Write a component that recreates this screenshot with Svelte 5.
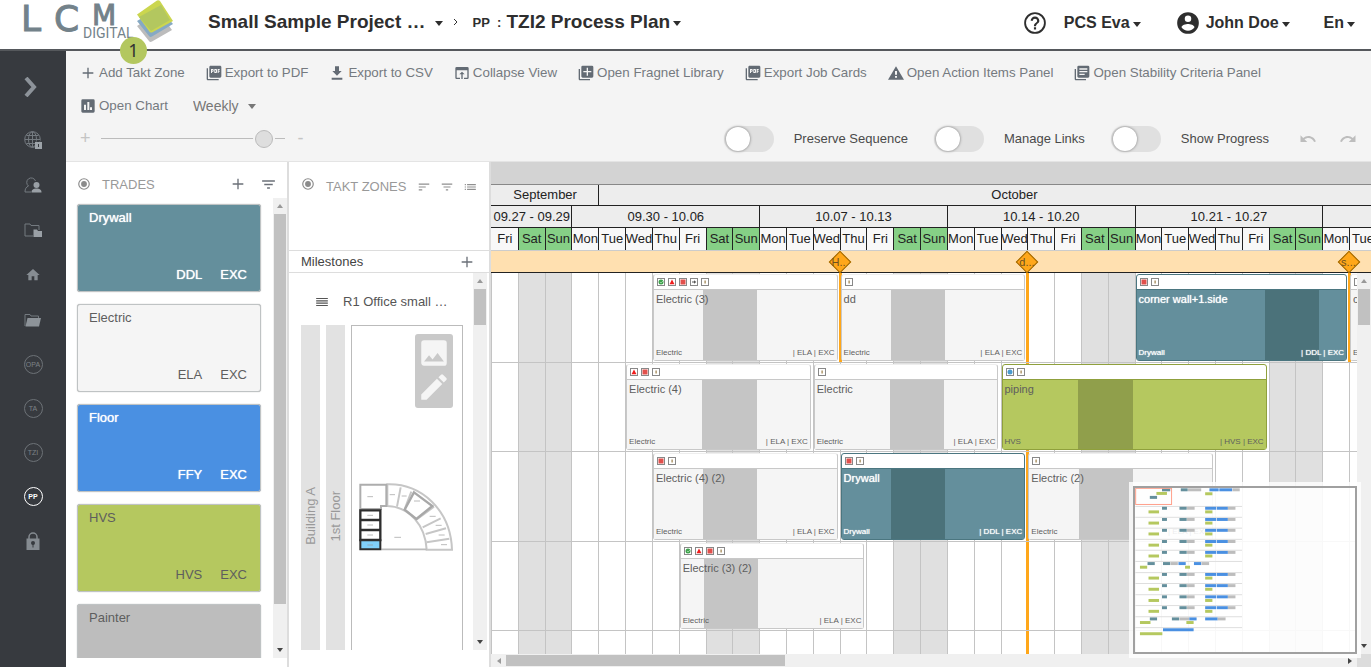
<script lang="ts">
	const DAYS = 38;
	const dayNames = ['Mon', 'Tue', 'Wed', 'Thu', 'Fri', 'Sat', 'Sun'];

	// the calendar starts on a Friday
	const days = Array.from({ length: DAYS }, (_, i) => dayNames[(i + 4) % 7]);

	const months = [
		{ name: 'September', span: 4 },
		{ name: 'October', span: 31 },
		{ name: 'November', span: 3 }
	];

	const weeks = [
		{ name: '09.27 - 09.29', span: 3 },
		{ name: '09.30 - 10.06', span: 7 },
		{ name: '10.07 - 10.13', span: 7 },
		{ name: '10.14 - 10.20', span: 7 },
		{ name: '10.21 - 10.27', span: 7 },
		{ name: '10.28 - 11.03', span: 7 }
	];

	const milestones = [
		{ day: 13, name: 'H..', long: false },
		{ day: 20, name: 'd...', long: true },
		{ day: 32, name: 's...', long: false }
	];

	const lanes = [
		[
			{ title: 'Electric (3)', trade: 'Electric', code: 'ELA', kind: 'electric', start: 6, length: 7, flags: ['ok', 'alert', 'stop', 'arrow', 'note'] },
			{ title: 'dd', trade: 'Electric', code: 'ELA', kind: 'electric', start: 13, length: 7, flags: ['note'] },
			{ title: 'corner wall+1.side', trade: 'Drywall', code: 'DDL', kind: 'drywall', start: 24, length: 8, flags: ['stop', 'note'] },
			{ title: 'c', trade: 'Electric', code: 'ELA', kind: 'electric', start: 32, length: 6, flags: ['note'] }
		],
		[
			{ title: 'Electric (4)', trade: 'Electric', code: 'ELA', kind: 'electric', start: 5, length: 7, flags: ['alert', 'stop', 'note'] },
			{ title: 'Electric', trade: 'Electric', code: 'ELA', kind: 'electric', start: 12, length: 7, flags: ['note'] },
			{ title: 'piping', trade: 'HVS', code: 'HVS', kind: 'hvs', start: 19, length: 10, flags: ['water', 'note'] }
		],
		[
			{ title: 'Electric (4) (2)', trade: 'Electric', code: 'ELA', kind: 'electric', start: 6, length: 7, flags: ['stop', 'note'] },
			{ title: 'Drywall', trade: 'Drywall', code: 'DDL', kind: 'drywall', start: 13, length: 7, flags: ['stop', 'note'] },
			{ title: 'Electric (2)', trade: 'Electric', code: 'ELA', kind: 'electric', start: 20, length: 7, flags: ['note'] }
		],
		[
			{ title: 'Electric (3) (2)', trade: 'Electric', code: 'ELA', kind: 'electric', start: 7, length: 7, flags: ['ok', 'alert', 'stop', 'note'] }
		]
	];

	const trades = [
		{ name: 'Drywall', code: 'DDL', kind: 'drywall' },
		{ name: 'Electric', code: 'ELA', kind: 'electric' },
		{ name: 'Floor', code: 'FFY', kind: 'floor' },
		{ name: 'HVS', code: 'HVS', kind: 'hvs' },
		{ name: 'Painter', code: '', kind: 'painter' }
	];

	const tools = [
		{ icon: 'plus', label: 'Add Takt Zone' },
		{ icon: 'pdf', label: 'Export to PDF' },
		{ icon: 'download', label: 'Export to CSV' },
		{ icon: 'browser', label: 'Collapse View' },
		{ icon: 'library', label: 'Open Fragnet Library' },
		{ icon: 'pdf', label: 'Export Job Cards' },
		{ icon: 'warning', label: 'Open Action Items Panel' },
		{ icon: 'books', label: 'Open Stability Criteria Panel' },
		{ icon: 'chart', label: 'Open Chart' }
	];

	const switches = ['Preserve Sequence', 'Manage Links', 'Show Progress'];

	const paths: Record<string, string> = {
		plus: 'M20 13h-7v7h-2v-7H4v-2h7V4h2v7h7z',
		pdf: 'M21 1H7C5.900 1 5 1.900 5 3v14c0 1.100.9 2 2 2h14c1.100 0 2-.9 2-2V3c0-1.100-.9-2-2-2zM11.500 8.500c0 .83-.67 1.500-1.500 1.500H9v2H7.500V6H10c.83 0 1.500.67 1.500 1.500v1zm5 2c0 .83-.67 1.500-1.500 1.500h-2.500V6H15c.83 0 1.500.67 1.500 1.500v3zm4-3H19v1h1.500V10H19v2h-1.500V6h3v1.500zM9 8.500h1v-1H9v1zM3 5H1v16c0 1.100.9 2 2 2h16v-2H3V5zm11 5.500h1v-3h-1v3z',
		download: 'M19 9h-4V2H9v7H5l7 7 7-7zM4 19v3h16v-3z',
		browser: 'M20 3H4a2 2 0 0 0-2 2v14c0 1.100.9 2 2 2h5v-2H4V8h16v11h-5v2h5a2 2 0 0 0 2-2V5a2 2 0 0 0-2-2zm-8 7l-4 4h3v7h2v-7h3z',
		library: 'M3 6H1v15c0 1.100.9 2 2 2h15v-2H3zm18-5H7a2 2 0 0 0-2 2v14c0 1.100.9 2 2 2h14a2 2 0 0 0 2-2V3a2 2 0 0 0-2-2zm-1 10h-5v5h-2v-5H8V9h5V4h2v5h5z',
		warning: 'M0 22h24L12 2zm13.500-3h-3v-2.500h3zm0-4.500h-3V9h3z',
		books: 'M3 6H1v15c0 1.100.9 2 2 2h15v-2H3zm18-5H7a2 2 0 0 0-2 2v14c0 1.100.9 2 2 2h14a2 2 0 0 0 2-2V3a2 2 0 0 0-2-2zm-1 10H8V9h12zm-4 4H8v-2h8zm4-8H8V5h12z',
		chart: 'M20 2H4a2 2 0 0 0-2 2v16c0 1.100.9 2 2 2h16a2 2 0 0 0 2-2V4a2 2 0 0 0-2-2zM9 18H6v-8h3zm5 0h-3V6h3zm4 0h-3v-4h3z',
		undo: 'M12.500 8c-2.650 0-5.050.99-6.900 2.600L2 7v9h9l-3.620-3.620c1.390-1.160 3.160-1.880 5.120-1.880 3.540 0 6.550 2.310 7.600 5.500l2.370-.78C21.080 11.030 17.150 8 12.500 8z',
		redo: 'M18.400 10.600C16.550 8.990 14.150 8 11.500 8c-4.650 0-8.580 3.030-9.960 7.220L3.900 16c1.050-3.190 4.050-5.500 7.600-5.500 1.950 0 3.730.72 5.120 1.880L13 16h9V7l-3.600 3.600z',
		filter: 'M10 18h4v-2h-4zM3 6v2h18V6zm3 7h12v-2H6z',
		sort: 'M3 18h6v-2H3zM3 6v2h18V6zm0 7h12v-2H3z',
		list: 'M3 9h2V7H3zm0 4h2v-2H3zm0 4h2v-2H3zm4-10v2h15V7zm0 6h15v-2H7zm0 4h15v-2H7z',
		menu: 'M2 19h20v-2H2zm0-4h20v-2H2zm0-4h20V9H2zm0-4h20V5H2z',
		radio: 'M12 7a5 5 0 1 0 0 10 5 5 0 0 0 0-10zm0-5a10 10 0 1 0 0 20 10 10 0 0 0 0-20zm0 18a8 8 0 1 1 0-16 8 8 0 0 1 0 16z',
		help: 'M11 18h2v-2h-2zm1-16a10 10 0 1 0 0 20 10 10 0 0 0 0-20zm0 18.300a8.300 8.300 0 1 1 0-16.600 8.300 8.300 0 0 1 0 16.600zM12 6a4 4 0 0 0-4 4h2a2 2 0 1 1 4 0c0 2-3 1.750-3 5h2c0-2.250 3-2.500 3-5a4 4 0 0 0-4-4z',
		account: 'M12 2a10 10 0 1 0 0 20 10 10 0 0 0 0-20zm0 3a3 3 0 1 1 0 6 3 3 0 0 1 0-6zm0 14.200a7.200 7.200 0 0 1-6-3.220c.03-1.990 4-3.080 6-3.080s5.970 1.090 6 3.080a7.200 7.200 0 0 1-6 3.220z',
		image: 'M21 19V5a2 2 0 0 0-2-2H5a2 2 0 0 0-2 2v14c0 1.100.9 2 2 2h14a2 2 0 0 0 2-2zM8.500 13.500l2.500 3.010L14.500 12l4.500 6H5z',
		edit: 'M3 17.250V21h3.750L17.810 9.940l-3.750-3.750zM20.710 7.040a1 1 0 0 0 0-1.410l-2.340-2.340a1 1 0 0 0-1.410 0l-1.830 1.830 3.750 3.750z',
		home: 'M10 20v-6h4v6h5v-8h3L12 3 2 12h3v8z'
	};

	// overview bars: [x, y, width, colour]
	const teal = '#648f9c';
	const green = '#b5c85f';
	const blue = '#4a90e2';
	const grey = '#bdbdbd';
	const repeated = [97, 131, 164, 198, 231, 298, 332, 366, 399];
	const overview = [
		[423, 41, 25, teal], [406, 52, 32, green], [386, 64, 22, teal], [480, 41, 21, teal],
		[502, 41, 40, grey], [567, 41, 28, blue], [597, 41, 39, blue], [637, 41, 22, grey], [554, 53, 22, green],
		...repeated.flatMap((y) => [
			[423, y, 15, teal], [382, y + 11, 32, green], [476, y, 22, teal], [499, y, 23, grey],
			[554, y, 34, blue], [590, y, 33, blue], [623, y, 23, grey], [554, y + 11, 22, green]
		]),
		[379, 265, 22, teal], [356, 276, 22, green], [426, 265, 22, teal], [449, 265, 22, grey],
		[473, 265, 22, blue], [493, 276, 15, green], [520, 265, 22, blue], [543, 265, 23, grey],
		[386, 433, 22, teal], [356, 444, 32, green], [453, 433, 22, teal], [476, 433, 30, grey],
		[506, 433, 22, blue], [497, 444, 22, green], [554, 433, 38, blue], [592, 433, 24, grey],
		[426, 466, 93, blue], [356, 478, 68, green]
	] as [number, number, number, string][];

	const pct = (n: number) => (n / DAYS) * 100 + '%';

	function weekends(task: { start: number; length: number }) {
		const out: number[] = [];
		for (let d = task.start; d < task.start + task.length; d++) {
			if (days[d] === 'Sat') out.push(((d - task.start) / task.length) * 100);
		}
		return out;
	}
</script>

{#snippet icon(name: string, size: number)}
	<svg class="icon" width={size} height={size} viewBox="0 0 24 24" aria-hidden="true">
		<path d={paths[name]} fill="currentColor" fill-rule="evenodd" />
	</svg>
{/snippet}

{#snippet flag(name: string)}
	<svg width="8" height="8" viewBox="0 0 8 8" aria-hidden="true">
		<rect x=".5" y=".5" width="7" height="7" fill="#fff" stroke="#888" />
		{#if name === 'ok'}
			<circle cx="4" cy="4" r="2.500" fill="#3fa34d" />
			<path d="M3 4l1 1 2-2" stroke="#b7e4bd" fill="none" stroke-width=".7" />
		{:else if name === 'alert'}
			<path d="M4 1.500L6.500 6.200h-5z" fill="#f01c1c" />
		{:else if name === 'stop'}
			<rect x="1.500" y="1.500" width="5" height="5" fill="#e2504c" />
		{:else if name === 'arrow'}
			<path d="M2 3.500h2V2.200L6.300 4 4 5.800V4.500H2z" fill="#555" />
		{:else if name === 'water'}
			<circle cx="4" cy="4" r="2.500" fill="#4a9bd0" />
		{:else}
			<path d="M3.500 2.500h1.200V5.500H3.500z" fill="#9a7d45" />
		{/if}
	</svg>
{/snippet}

<div class="app">
	<header>
		<a class="logo" href="#home" aria-label="LCM Digital">
			<svg width="180" height="49" viewBox="0 0 180 49">
				<path d="M137 26L159 12 172 30 152 41.500Q150 42.500 149 41Z" fill="#bcbcbc" />
				<path d="M137 21L159 8 173 24 152 36.500Q150 37.500 149 36Z" fill="#86a9c4" />
				<path d="M137 14.500L157 .5Q159 0 160 1L173 21 152 32.500Q150 33 149 31Z" fill="#cbd64f" />
				<path d="M139 17L161 5 170 20 151 31Z" fill="#b3c75f" />
				<text class="lcm" x="21" y="31">L</text>
				<text class="lcm" x="54" y="31">C</text>
				<text class="lcm small" x="92" y="25">M</text>
				<text class="digital" x="83" y="38">DIGITAL</text>
			</svg>
		</a>
		<span class="badge">1</span>
		<nav class="crumbs" aria-label="Breadcrumb">
			<button class="title">Small Sample Project …<i class="caret spaced"></i></button>
			<svg width="6" height="8" viewBox="0 0 6 8"><path d="M1 1l3 3-3 3" fill="none" stroke="#333" /></svg>
			<button class="title"><small>PP&nbsp; :</small>TZI2 Process Plan<i class="caret"></i></button>
		</nav>
		<div class="account">
			<button class="help" aria-label="Help">{@render icon('help', 26)}</button>
			<button>PCS Eva<i class="caret"></i></button>
			<button class="user">{@render icon('account', 26)}John Doe<i class="caret"></i></button>
			<button class="lang">En<i class="caret"></i></button>
		</div>
	</header>

	<div class="body">
		<aside class="sidebar">
			<button class="expand" aria-label="Expand menu">
				<svg width="14" height="20" viewBox="0 0 14 20"><path d="M2 1l8 9-8 9" fill="none" stroke="#8d939a" stroke-width="4" /></svg>
			</button>
			<nav>
				<a href="#global" aria-label="Global">
					<svg width="18" height="18" viewBox="0 0 18 18" fill="none" stroke="#747a80">
						<circle cx="8.500" cy="8.500" r="7.800" />
						<ellipse cx="8.500" cy="8.500" rx="4" ry="7.800" />
						<path d="M8.500 1v15M1 8.500h15M2.500 4.500h12M2.500 12.500h12" />
						<path d="M11 11h7v7h-7z" fill="#9da3a9" stroke="none" />
						<path d="M13 11V9.500h3V11M14.500 13v3" stroke="#373a3f" />
					</svg>
				</a>
				<a href="#users" aria-label="Users">
					<svg width="18" height="18" viewBox="0 0 18 18">
						<path d="M7 16H1c0-3 1-5 3.500-6A4.500 4.500 0 1 1 11.500 5" fill="none" stroke="#747a80" />
						<circle cx="12.500" cy="9" r="3" fill="#9aa0a6" />
						<path d="M7.500 16.500c0-3 2-4 5-4s5 1 5 4z" fill="#9aa0a6" />
					</svg>
				</a>
				<a href="#folders" aria-label="Folders">
					<svg width="18" height="18" viewBox="0 0 18 18">
						<path d="M9 15H1V3h5l1 1.500h8V9" fill="none" stroke="#747a80" />
						<path d="M9.500 8.500H13l1 1.500h4v6H9.500z" fill="#9aa0a6" />
					</svg>
				</a>
				<a href="#start" aria-label="Home">{@render icon('home', 16)}</a>
				<a href="#files" aria-label="Files">
					<svg width="18" height="18" viewBox="0 0 18 18">
						<path d="M1 15V3.500h5L7 5h7.500v2" fill="none" stroke="#747a80" />
						<path d="M3.500 7H17l-2 8.500H1.500z" fill="#8d9399" />
					</svg>
				</a>
				<a href="#opa" class="ring">OPA</a>
				<a href="#ta" class="ring">TA</a>
				<a href="#tzi" class="ring">TZI</a>
				<a href="#pp" class="ring current">PP</a>
				<a href="#lock" aria-label="Lock">
					<svg width="18" height="18" viewBox="0 0 18 18">
						<path d="M5 8V5a4 4 0 0 1 8 0v3" fill="none" stroke="#858b91" stroke-width="1.500" />
						<path d="M2.500 6.500h13V18h-13z" fill="#858b91" />
						<circle cx="9" cy="11" r="2" fill="#373a3f" />
						<path d="M9 11v4.500" stroke="#373a3f" />
					</svg>
				</a>
			</nav>
		</aside>

		<main>
			<section class="toolbar">
				<div class="tools">
					{#each tools as tool}
						<button>{@render icon(tool.icon, 16)}{tool.label}</button>
					{/each}
					<div class="select">
						<select aria-label="Interval"><option>Weekly</option></select>
						<i class="caret spaced"></i>
					</div>
				</div>
				<div class="controls">
					<button class="zoom" aria-label="Zoom in">+</button>
					<input class="slider" type="range" min="0" max="100" value="93" aria-label="Zoom" />
					<button class="zoom" aria-label="Zoom out">-</button>
					<div class="switches">
						{#each switches as name}
							<label><input type="checkbox" />{name}</label>
						{/each}
						<div class="history">
							<button aria-label="Undo">{@render icon('undo', 18)}</button>
							<button aria-label="Redo">{@render icon('redo', 18)}</button>
						</div>
					</div>
				</div>
			</section>

			<div class="panels">
				<section class="trades">
					<div class="panel-head">
						{@render icon('radio', 14)}
						<h2>TRADES</h2>
						<button class="push" aria-label="Add trade">{@render icon('plus', 16)}</button>
						<button aria-label="Filter trades">{@render icon('filter', 17)}</button>
					</div>
					<div class="scroll-area">
						<div class="cards">
							{#each trades as trade}
								<article class="card {trade.kind}">
									<strong>{trade.name}</strong>
									{#if trade.code}
										<p><span>{trade.code}</span><span>EXC</span></p>
									{/if}
								</article>
							{/each}
						</div>
						<div class="vbar trades-bar"><i class="up"></i><b></b><i class="down"></i></div>
					</div>
				</section>

				<section class="zones">
					<div class="panel-head">
						{@render icon('radio', 14)}
						<h2>TAKT ZONES</h2>
						<button aria-label="Sort">{@render icon('sort', 14)}</button>
						<button aria-label="Filter zones">{@render icon('filter', 14)}</button>
						<button aria-label="List">{@render icon('list', 14)}</button>
					</div>
					<div class="milestone-head">
						<span>Milestones</span>
						<button aria-label="Add milestone">{@render icon('plus', 16)}</button>
					</div>
					<div class="scroll-area">
						<div class="zone-tree">
							<div class="zone-name">{@render icon('menu', 14)}<span>R1 Office small …</span></div>
							<div class="levels">
								<div class="level">Building A</div>
								<div class="level">1st Floor</div>
								<div class="plan">
									<div class="plan-tools">
										<button aria-label="Image">{@render icon('image', 34)}</button>
										<button aria-label="Edit">{@render icon('edit', 34)}</button>
									</div>
									<svg class="floor" width="97" height="70" viewBox="218 216 291 210" fill="none">
										<path d="M306 223C408 220 496 300 500 419H424C420 345 372 290 306 288Z" stroke="#c6c6c6" stroke-width="6" />
										<path d="M346 232L335 290M378 245L358 297M446 290L394 328M466 325L412 352M482 355L421 372M492 386L424 397" stroke="#c6c6c6" stroke-width="6" />
										<path d="M386 247L441 288 393 327 358 299Z" stroke="#a8a8a8" stroke-width="7" />
										<path d="M225 224H303V288H287V297H225Z" stroke="#adadad" stroke-width="6" />
										<path d="M288 418H424" stroke="#bbb" stroke-width="5" />
										<path d="M225 301H285V330H225ZM225 330H285V360H225ZM225 360H285V390H225Z" stroke="#2d2d2d" stroke-width="7" />
										<path d="M225 391H285V418H225Z" fill="#80d0fa" stroke="#2d2d2d" stroke-width="6" />
										<path d="M246 260h17M246 316h17M246 345h17M246 375h17M246 405h17M313 254h16M349 258h15M386 273h18M433 319h18M451 346h18M460 375h18M467 404h18M327 382h20" stroke="#999" stroke-width="2" />
									</svg>
								</div>
							</div>
						</div>
						<div class="vbar zones-bar"><i class="up"></i><b></b><i class="down"></i></div>
					</div>
				</section>

				<section class="chart">
					<div class="strip"></div>
					<div class="viewport">
						<div class="timeline">
							<div class="cal months">
								{#each months as month}
									<span style="grid-column: span {month.span}">{month.name}</span>
								{/each}
							</div>
							<div class="cal weeks">
								{#each weeks as week}
									<span style="grid-column: span {week.span}">{week.name}</span>
								{/each}
							</div>
							<div class="cal days">
								{#each days as day}
									<span class:weekend={day === 'Sat' || day === 'Sun'}>{day}</span>
								{/each}
							</div>
							<div class="milestones">
								{#each milestones as stone}
									<button class="stone" style="left: {pct(stone.day)}"><span>{stone.name}</span></button>
								{/each}
							</div>
							<div class="grid">
								<div class="columns">
									{#each days as day}
										<i class:weekend={day === 'Sat' || day === 'Sun'}></i>
									{/each}
								</div>
								{#each milestones as stone}
									<i class="stone-line" class:long={stone.long} style="left: {pct(stone.day)}"></i>
								{/each}
								<div class="lanes">
									{#each lanes as lane}
										<div class="lane">
											{#each lane as task}
												<div class="slot" style="left: {pct(task.start)}; width: {pct(task.length)}">
													<article class="task {task.kind}">
														<div class="flags">
															{#each task.flags as name}{@render flag(name)}{/each}
														</div>
														<div class="task-body">
															{#each weekends(task) as left}
																<i class="off" style="left: {left}%; width: {200 / task.length}%"></i>
															{/each}
															<strong>{task.title}</strong>
															<p><span>{task.trade}</span><span>| {task.code} | EXC</span></p>
														</div>
													</article>
												</div>
											{/each}
										</div>
									{/each}
								</div>
							</div>
						</div>
						<div class="vbar chart-bar"><i class="up"></i><b></b><i class="down"></i></div>
					</div>
					<div class="hbar"><i class="left"></i><b></b><i class="right"></i><em></em></div>
					<div class="overview">
						<svg viewBox="342 36 666 498" width="220" height="164">
							<path d="M342 92h324M342 125h324M342 158h324M342 192h324M342 225h324M342 259h324M342 293h324M342 326h324M342 360h324M342 393h324M342 427h324M342 460h324" stroke="#ddd" stroke-width="3" />
							{#each overview as [x, y, width, fill]}
								<rect {x} y={y - 4} {width} height="9" {fill} />
							{/each}
							<rect x="343" y="37" width="109" height="49" fill="none" stroke="#ff9f8a" stroke-width="3" />
						</svg>
					</div>
				</section>
			</div>
		</main>
	</div>
</div>

<style>
	:global(body) {
		margin: 0;
	}

	.app {
		display: flex;
		flex-direction: column;
		height: 100vh;
		overflow: hidden;
		background: #fff;
		color: #333;
		font-family: 'Liberation Sans', Arial, sans-serif;
		font-size: 13px;
	}

	button {
		display: inline-flex;
		align-items: center;
		padding: 0;
		border: none;
		background: none;
		color: inherit;
		font-family: inherit;
		cursor: pointer;
	}

	.icon {
		flex: none;
	}

	.caret {
		display: inline-block;
		margin: 2px 0 0 3px;
		border: 4px solid transparent;
		border-top: 5px solid currentColor;
		border-bottom: none;
	}

	.caret.spaced {
		margin-left: 9px;
	}

	header {
		position: relative;
		display: flex;
		align-items: center;
		box-sizing: border-box;
		height: 51px;
		border-bottom: 2px solid #55585c;
		padding-right: 16px;
	}

	.logo {
		flex: none;
		width: 180px;
		height: 49px;
		margin-right: 28px;
	}

	.lcm {
		fill: #73828a;
		font-family: 'DejaVu Sans', sans-serif;
		font-size: 36px;
		stroke: #73828a;
		stroke-width: 1px;
	}

	.lcm.small {
		font-size: 28px;
	}

	.digital {
		fill: #73828a;
		font-family: Roboto, sans-serif;
		font-size: 14px;
	}

	.badge {
		position: absolute;
		z-index: 5;
		top: 37px;
		left: 120px;
		width: 27px;
		border-radius: 50%;
		background: #b3c75f;
		font-family: 'Noto Sans', sans-serif;
		font-size: 18px;
		line-height: 27px;
		text-align: center;
	}

	.crumbs {
		display: flex;
		align-items: center;
		gap: 10px;
		padding-bottom: 5px;
	}

	.title {
		color: #2e2e2e;
		font-size: 19px;
		font-weight: bold;
		white-space: nowrap;
	}

	.title small {
		margin: 0 5px 0 4px;
		font-size: 13px;
	}

	.account {
		display: flex;
		align-items: center;
		margin-left: auto;
		padding-bottom: 3px;
	}

	.account button {
		color: #2e2e2e;
		font-size: 16px;
		font-weight: bold;
		white-space: nowrap;
	}

	.account .help {
		margin-right: 14px;
	}

	.user {
		gap: 3px;
		margin-left: 34px;
	}

	.user .caret {
		margin-left: 0;
	}

	.account .icon {
		margin-right: 2px;
	}

	.lang {
		margin-left: 34px;
	}

	.body {
		display: flex;
		flex: 1;
		min-height: 0;
	}

	.sidebar {
		flex: none;
		width: 66px;
		background: #373a3f;
	}

	.expand {
		margin: 26px 0 0 24px;
	}

	.sidebar nav {
		display: flex;
		flex-direction: column;
		align-items: center;
		justify-content: space-between;
		height: 425px;
		margin-top: 28px;
	}

	.sidebar a {
		display: flex;
		align-items: center;
		justify-content: center;
		width: 24px;
		height: 24px;
		color: #868c92;
		text-decoration: none;
	}

	.sidebar .ring {
		box-sizing: border-box;
		width: 19px;
		height: 19px;
		margin: 2px 0;
		border: 1px solid #6d7277;
		border-radius: 50%;
		color: #7d8287;
		font-size: 7px;
	}

	.sidebar .current {
		border-color: #fff;
		color: #fff;
		font-weight: bold;
	}

	main {
		display: flex;
		flex: 1;
		flex-direction: column;
		min-width: 0;
	}

	.toolbar {
		box-sizing: border-box;
		border-bottom: 1px solid #e4e4e4;
		padding: 5px 14px 6px;
		background: #f4f4f4;
	}

	.tools {
		display: flex;
		flex-wrap: wrap;
		column-gap: 21px;
	}

	.tools button {
		gap: 3px;
		height: 33px;
		color: #757a80;
		white-space: nowrap;
	}

	.tools .icon {
		color: #636b74;
	}

	.select {
		display: flex;
		align-items: center;
		margin-left: 4px;
		color: #777;
	}

	select {
		appearance: none;
		border: none;
		padding: 0;
		background: none;
		color: inherit;
		font-family: inherit;
		font-size: 14px;
	}

	.controls {
		display: flex;
		align-items: center;
		height: 33px;
	}

	.zoom {
		color: #c4c4c4;
		font-size: 18px;
	}

	.slider {
		width: 184px;
		height: 20px;
		margin: 0 13px 0 10px;
		appearance: none;
		background: linear-gradient(#bcbcbc, #bcbcbc) center / 100% 1px no-repeat;
	}

	.slider::-webkit-slider-thumb {
		box-sizing: border-box;
		width: 18px;
		height: 18px;
		border: 1px solid #bbb;
		border-radius: 50%;
		appearance: none;
		background: #dedede;
		box-shadow: 0 0 0 2px #f4f4f4;
	}

	.switches {
		display: flex;
		align-items: center;
		gap: 26px;
		margin-left: auto;
	}

	.switches label {
		display: flex;
		align-items: center;
		gap: 20px;
		color: #4a4a4a;
		white-space: nowrap;
	}

	.history {
		display: flex;
		gap: 22px;
		margin-left: 4px;
		color: #bdbdbd;
	}

	input[type='checkbox'] {
		width: 50px;
		height: 26px;
		margin: 0;
		border-radius: 13px;
		appearance: none;
		background: #e0e0e0;
	}

	input[type='checkbox']::before {
		display: block;
		width: 24px;
		height: 24px;
		margin: 1px 2px;
		border-radius: 50%;
		background: #fff;
		box-shadow: 0 0 3px #777;
		content: '';
	}

	.panels {
		display: flex;
		flex: 1;
		min-height: 0;
	}

	.panel-head {
		display: flex;
		align-items: center;
		box-sizing: border-box;
		color: #8b8b8b;
	}

	h2 {
		margin: 0;
		color: #999;
		font-size: 13px;
		font-weight: normal;
		white-space: nowrap;
	}

	.trades,
	.zones {
		display: flex;
		flex: none;
		flex-direction: column;
		box-sizing: border-box;
		border-right: 2px solid #ddd;
	}

	.trades {
		width: 223px;
		padding-bottom: 9px;
	}

	.trades .panel-head {
		height: 36px;
		padding: 8px 10px 0 11px;
	}

	.trades h2 {
		margin-left: 11px;
	}

	.trades button {
		margin-left: 14px;
		color: #6b7078;
	}

	.trades .push {
		margin-left: auto;
	}

	.scroll-area {
		display: flex;
		flex: 1;
		min-height: 0;
		overflow: hidden;
	}

	.cards {
		display: flex;
		flex: 1;
		flex-direction: column;
		gap: 12px;
		padding: 6px 12px 0 11px;
	}

	.card {
		display: flex;
		flex: none;
		flex-direction: column;
		justify-content: space-between;
		box-sizing: border-box;
		height: 88px;
		border: 1px solid #bfc3c4;
		border-radius: 3px;
		padding: 5px 13px 9px 11px;
		background: var(--fill);
		box-shadow: 0 0 1px #999;
		color: #5e5e5e;
	}

	.card strong,
	.task strong {
		font-weight: normal;
	}

	.card p,
	.task p {
		display: flex;
		margin: 0;
	}

	.card p {
		gap: 18px;
		justify-content: flex-end;
	}

	.drywall {
		--fill: #648f9c;
		--off: #4b727a;
		--edge: #4b7680;
	}

	.electric {
		--fill: #f5f5f5;
		--off: #c5c5c5;
		--edge: #c8c8c8;
	}

	.floor {
		--fill: #4a90e2;
	}

	.hvs {
		--fill: #b5c85f;
		--off: #909f4b;
		--edge: #8fa03c;
	}

	.painter {
		--fill: #bdbdbd;
	}

	.card.drywall,
	.card.floor,
	.task.drywall {
		color: #fff;
		text-shadow: 0 0 1px #fff;
	}

	.zones {
		width: 202px;
	}

	.zones .panel-head {
		align-items: flex-start;
		height: 88px;
		padding: 15px 0 0 12px;
	}

	.zones h2 {
		margin: 2px 11px 0 11px;
	}

	.zones .panel-head button {
		margin: 3px 9px 0 0;
		color: #8f8f8f;
	}

	.milestone-head {
		display: flex;
		align-items: center;
		justify-content: space-between;
		box-sizing: border-box;
		height: 23px;
		border: solid #ddd;
		border-width: 1px 0;
		padding: 0 14px 0 12px;
		color: #444;
	}

	.milestone-head .icon {
		color: #6b7078;
	}

	.zones .scroll-area {
		padding: 0 2px 17px 12px;
	}

	.zone-tree {
		display: flex;
		flex: 1;
		flex-direction: column;
		min-width: 0;
	}

	.zone-name {
		display: flex;
		align-items: center;
		gap: 14px;
		height: 52px;
		padding: 5px 0 0 14px;
		box-sizing: border-box;
		color: #555;
		white-space: nowrap;
	}

	.levels {
		display: flex;
		flex: 1;
		gap: 6px;
		min-height: 0;
	}

	/* turned round so that the text reads from bottom to top */
	.level {
		display: flex;
		align-items: center;
		justify-content: center;
		box-sizing: border-box;
		width: 19px;
		padding-bottom: 57px;
		background: #e2e2e2;
		color: #999;
		line-height: 19px;
		writing-mode: sideways-lr;
		padding: 57px 0 0;
	}

	.plan {
		display: flex;
		flex: none;
		flex-direction: column;
		box-sizing: border-box;
		width: 112px;
		border: 1px solid #bbb;
		border-bottom: none;
		padding: 8px 9px 8px 6px;
	}

	.plan-tools {
		display: flex;
		flex-direction: column;
		align-items: center;
		align-self: flex-end;
		width: 38px;
		padding: 2px 0 4px;
		border-radius: 3px;
		background: #c9c9c9;
		color: #f5f5f5;
	}

	.plan svg.floor {
		flex: none;
		margin-top: 74px;
	}

	.vbar {
		display: flex;
		flex: none;
		flex-direction: column;
		align-items: center;
		box-sizing: border-box;
		width: 14px;
		padding: 6px 0;
		background: #f0f0f0;
	}

	.vbar b {
		width: 12px;
		margin-top: 6px;
		background: #c1c1c1;
	}

	.up,
	.down {
		border: 3px solid transparent;
	}

	.up {
		border-top: none;
		border-bottom: 4px solid #999;
	}

	.down {
		margin-top: auto;
		border-top: 4px solid #444;
		border-bottom: none;
	}

	.trades-bar b {
		height: 87%;
	}

	.zones-bar b,
	.chart-bar b {
		height: 36px;
	}

	.chart {
		position: relative;
		display: flex;
		flex: 1;
		flex-direction: column;
		min-width: 0;
	}

	.strip {
		height: 22px;
		background: #d3d3d3;
	}

	.viewport {
		position: relative;
		flex: 1;
		min-height: 0;
		overflow: hidden;
	}

	.timeline {
		display: flex;
		flex-direction: column;
		width: 1019px;
		height: 100%;
	}

	.cal {
		display: grid;
		flex: none;
		grid-template-columns: repeat(38, minmax(0, 1fr));
		border-bottom: 1px solid #222;
		background: #ededed;
		color: #222;
		line-height: 21px;
	}

	.cal span {
		display: flex;
		justify-content: center;
		border-left: 1px solid #222;
		white-space: nowrap;
	}

	.cal span:first-child {
		border-left-color: transparent;
	}

	.months {
		border-top: 1px solid #888;
		line-height: 20px;
	}

	.days {
		border-bottom-color: #ccc;
		background: #f8f8f8;
		line-height: 22px;
	}

	.days .weekend {
		background: #86d086;
	}

	.milestones {
		position: relative;
		flex: none;
		height: 21px;
		border-bottom: 1px solid #222;
		background: #ffe0b0;
	}

	.stone {
		position: absolute;
		z-index: 2;
		top: 0;
		width: 22px;
		height: 22px;
		margin-left: -11px;
		color: #6d5122;
		font-size: 11px;
	}

	.stone::before {
		position: absolute;
		top: 3px;
		left: 3px;
		width: 14px;
		height: 14px;
		border: 1px solid #9a6500;
		background: #ffa71a;
		content: '';
		rotate: 45deg;
	}

	.stone span {
		position: relative;
		padding-left: 3px;
	}

	.grid {
		position: relative;
		flex: 1;
		min-height: 0;
	}

	.columns {
		position: absolute;
		inset: 0;
		display: grid;
		grid-template-columns: repeat(38, minmax(0, 1fr));
	}

	.columns i {
		border-left: 1px solid #c4c4c4;
	}

	.columns .weekend {
		background: #e0e0e0;
	}

	.stone-line {
		position: absolute;
		top: 0;
		width: 3px;
		height: 89px;
		margin-left: -1px;
		background: #ffa71a;
	}

	.stone-line.long {
		height: 100%;
	}

	.lanes {
		position: relative;
		display: flex;
		flex-direction: column;
		height: 358px;
	}

	.lane {
		position: relative;
		flex: 1;
		border-bottom: 1px solid #c4c4c4;
	}

	.slot {
		position: absolute;
		top: 0;
		bottom: 0;
		box-sizing: border-box;
		padding: 1px 2px 1px 1px;
	}

	.task {
		display: flex;
		flex-direction: column;
		box-sizing: border-box;
		height: 100%;
		border: 1px solid var(--edge);
		border-radius: 3px;
		background: #fff;
		color: #5e5e5e;
	}

	.task.electric {
		border-top-color: #eee;
	}

	.flags {
		display: flex;
		gap: 3px;
		height: 10px;
		padding: 3px 3px 1px;
	}

	.task-body {
		position: relative;
		display: flex;
		flex: 1;
		flex-direction: column;
		justify-content: space-between;
		border-top: 1px solid var(--edge);
		padding: 2px 2px 3px;
		background: var(--fill);
	}

	.task-body strong,
	.task-body p {
		position: relative;
	}

	.task strong {
		font-size: 11px;
		line-height: 14px;
		white-space: nowrap;
	}

	.task p {
		justify-content: space-between;
		font-size: 8px;
		line-height: 9px;
	}

	.off {
		position: absolute;
		top: 0;
		bottom: 0;
		margin-left: -3px;
		padding-right: 2px;
		background: var(--off);
	}

	.chart-bar {
		position: absolute;
		z-index: 1;
		top: 89px;
		right: 0;
		bottom: 0;
	}

	.hbar {
		display: flex;
		flex: none;
		align-items: center;
		height: 13px;
		background: #f0f0f0;
	}

	.hbar b {
		width: 279px;
		height: 11px;
		margin-left: 5px;
		background: #c1c1c1;
	}

	.hbar em {
		width: 14px;
		height: 100%;
		background: #dcdcdc;
	}

	.left,
	.right {
		border: 3px solid transparent;
	}

	.left {
		margin-left: 6px;
		border-right: 4px solid #999;
		border-left: none;
	}

	.right {
		margin: 0 5px 0 auto;
		border-right: none;
		border-left: 4px solid #444;
	}

	.overview {
		position: absolute;
		z-index: 3;
		right: 14px;
		bottom: 13px;
		box-sizing: border-box;
		width: 224px;
		height: 168px;
		border: 2px solid #a0a0a0;
		background: rgba(255, 255, 255, 0.88);
		box-shadow: 0 0 0 4px rgba(255, 255, 255, 0.8);
	}

	.overview svg {
		display: block;
	}
</style>
